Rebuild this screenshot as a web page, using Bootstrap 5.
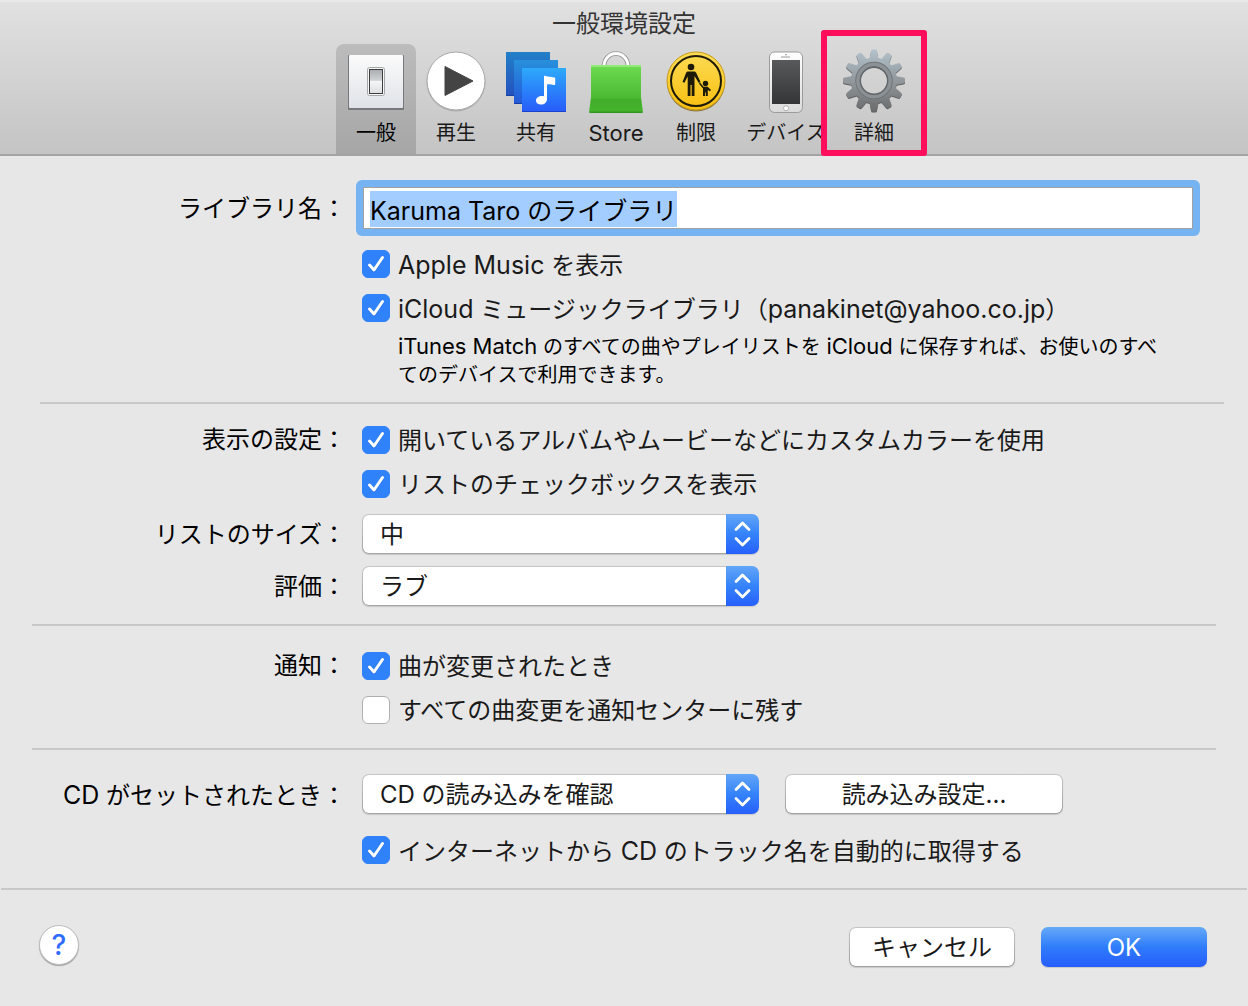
<!DOCTYPE html>
<html lang="ja">
<head>
<meta charset="utf-8">
<meta name="viewport" content="width=device-width, initial-scale=1">
<title>一般環境設定</title>
<link href="https://cdn.jsdelivr.net/npm/bootstrap@5.3.0/dist/css/bootstrap.min.css" rel="stylesheet">
<style>
:root { --win: #e7e7e7; --rule: #c8c8c8; }
body { background: var(--win); color: #1a1a1a; font: 400 24px/36px Inter, "Noto Sans CJK JP", sans-serif; }
.latin { font-size: 25px; }

/* title bar and toolbar */
.prefs-head { background: linear-gradient(#e1e1e1, #c4c4c4); border-top: 2px solid #e9e9e9; border-bottom: 2px solid #a3a3a3; }
.prefs-head h1 { font-size: 24px; line-height: 40px; padding-top: 2px; font-weight: 400; color: #333; margin: 0; }
.tool { width: 80px; height: 110px; padding: 4px 0 7px; border: 0; border-radius: 8px 8px 0 0; background: none; color: #1a1a1a; font-size: 20px; line-height: 28px; white-space: nowrap; position: relative; }
.tool svg { display: block; margin: 0 auto 3px; }
.tool .latin { font-size: 22px; }
.tool.chosen { background: linear-gradient(#bcbcbc, #a6a6a6); color: #000; }
.tool-wide { width: 100px; }
.tool-marked { width: 76px; }
.tool-marked::after { content: ""; position: absolute; inset: -14px -15px -2px; border: 6px solid #ff0f5b; border-radius: 3px; }

/* form rows */
.field-label { width: 346px; flex: none; text-align: right; color: #000; }
label.field-label, .tick-row label { padding-top: 2px; }
.rule { height: 2px; background: var(--rule); margin: 0 32px; }
.rule-first { margin: 0 24px 0 40px; }
.ring { background: #76b3f2; border-radius: 6px; padding: 7px; margin-left: -6px; }
.name-input { height: 42px; padding: 1px 6px 0; border: 1px solid #a2a2a2; border-radius: 0; color: #000; font-size: 25px; line-height: 34px; }
.name-input:focus { box-shadow: none; border-color: #a2a2a2; color: #000; }
.name-input::selection { background: #a4cdff; color: #000; }
.tick-row { display: flex; align-items: center; gap: 8px; height: 28px; white-space: nowrap; }
.tick-row .form-check-input { width: 28px; height: 28px; margin: 0; flex: none; border: 1px solid #b0b0b0; border-radius: 6px; background-color: #fff; }
.tick-row .form-check-input:checked { border-color: #3082fa; background-color: #3082fa; background-size: 28px 28px; background-position: center;
  background-image: url("data:image/svg+xml,%3Csvg xmlns='http://www.w3.org/2000/svg' viewBox='0 0 28 28'%3E%3Cpath d='M7.5 16 12 21 20.5 8' fill='none' stroke='%231d5fd0' stroke-opacity='.5' stroke-width='3' stroke-linecap='round' stroke-linejoin='round'/%3E%3Cpath d='M7.5 15 12 20 20.5 7.500' fill='none' stroke='white' stroke-width='3' stroke-linecap='round' stroke-linejoin='round'/%3E%3C/svg%3E"); }
.note { font-size: 20px; line-height: 28px; color: #000; padding: 10px 24px 0 36px; }
.note .latin { font-size: 22px; }
.popup { width: 397px; height: 40px; padding: 2px 40px 0 17px; border: 1px solid transparent; border-radius: 7px; color: #1a1a1a; font-size: 24px; line-height: 36px; box-shadow: 0 1px 1px rgba(0,0,0,.14);
  background:
    url("data:image/svg+xml,%3Csvg xmlns='http://www.w3.org/2000/svg' viewBox='0 0 33 40'%3E%3Cdefs%3E%3ClinearGradient id='g' x2='0' y2='1'%3E%3Cstop stop-color='%2362a6f7'/%3E%3Cstop offset='.5' stop-color='%233583fb'/%3E%3Cstop offset='1' stop-color='%23265ffb'/%3E%3C/linearGradient%3E%3C/defs%3E%3Cpath fill='url(%23g)' d='M0 0h33v40H0z'/%3E%3Cpath d='M10 15.500 16.500 9 23 15.500M10 24.500 16.500 31 23 24.500' fill='none' stroke='white' stroke-width='2.800' stroke-linecap='round' stroke-linejoin='round'/%3E%3C/svg%3E") right center / 33px 40px no-repeat border-box,
    linear-gradient(#fff, #fff) padding-box,
    linear-gradient(#c6c6c6, #a5a5a5) border-box; }
.push { height: 40px; padding: 1px 0 0; border: 1px solid transparent; border-radius: 7px; color: #1a1a1a; font-size: 24px; line-height: 36px; box-shadow: 0 1px 1px rgba(0,0,0,.14); background: linear-gradient(#fff, #fff) padding-box, linear-gradient(#c6c6c6, #a0a0a0) border-box; }
.push-wide { width: 278px; margin-left: 10px; }
.push-end { width: 166px; }
.push-main { color: #fff; background: linear-gradient(#66a9f8, #2f7dfb 50%, #265cfc) border-box; }
.help { width: 40px; height: 40px; padding: 0; border-radius: 50%; border: 1px solid #bdbdbd; background: #fff; color: #2f6bff; font-size: 28px; font-weight: 500; line-height: 36px; box-shadow: 0 1px 1px rgba(0,0,0,.3); }
.sec-name { padding: 24px 48px 13px 0; }
.sec-view { padding: 22px 32px 18px 0; }
.sec-note { padding: 26px 32px 24px 0; }
.sec-disc { padding: 24px 32px 24px 0; }
.ticks-name { margin-top: 14px; }
.ticks-disc { margin-top: 22px; }
.popup-stack { display: grid; gap: 12px; }
.prefs-foot { border-top: 2px solid var(--rule); padding: 35px 40px 39px 38px; margin: 0 1px; }
.foot-actions { gap: 26px; padding-top: 2px; }
</style>
<script src="https://cdn.jsdelivr.net/npm/bootstrap@5.3.0/dist/js/bootstrap.bundle.min.js"></script>
</head>
<body>
<header class="prefs-head">
  <h1 class="text-center">一般環境設定</h1>
  <nav class="d-flex justify-content-center" aria-label="環境設定">
    <button type="button" class="tool chosen">
      <svg width="64" height="68" viewBox="0 0 64 68">
        <defs>
          <linearGradient id="plate" x2="0" y2="1"><stop stop-color="#fbfbfb"/><stop offset="1" stop-color="#dfe3e8"/></linearGradient>
          <linearGradient id="rocker" x2="0" y2="1"><stop stop-color="#a9adb1"/><stop offset=".45" stop-color="#cfd2d5"/><stop offset=".5" stop-color="#f6f6f6"/><stop offset="1" stop-color="#dcdee1"/></linearGradient>
        </defs>
        <rect x="4" y="7" width="56" height="55" rx="1" fill="#75797d"/>
        <rect x="5" y="7" width="54" height="53" rx="1" fill="url(#plate)"/>
        <rect x="23.500" y="19.500" width="17" height="28" rx="2" fill="#f7f7f7" stroke="#a6a6a6"/>
        <rect x="25.500" y="21.500" width="13" height="24" fill="url(#rocker)" stroke="#3d3d3d"/>
      </svg>一般</button>
    <button type="button" class="tool">
      <svg width="64" height="68" viewBox="0 0 64 68">
        <circle cx="32" cy="34" r="29.500" fill="#8f8f8f" opacity=".5"/>
        <circle cx="32" cy="33" r="29" fill="#fff" stroke="#a9a9a9"/>
        <path d="M21 18.500 49 33 21 47.500z" fill="#444" stroke="#444" stroke-linejoin="round"/>
      </svg>再生</button>
    <button type="button" class="tool">
      <svg width="64" height="68" viewBox="0 0 64 68">
        <defs>
          <linearGradient id="s1" x2="0" y2="1"><stop stop-color="#2280c8"/><stop offset="1" stop-color="#2450bd"/></linearGradient>
          <linearGradient id="s2" x2="0" y2="1"><stop stop-color="#2890dc"/><stop offset="1" stop-color="#2458d8"/></linearGradient>
          <linearGradient id="s3" x2="0" y2="1"><stop stop-color="#2daafa"/><stop offset="1" stop-color="#275bfa"/></linearGradient>
        </defs>
        <g transform="translate(0 1)">
        <path fill="url(#s1)" d="M2 3h44v44H2z"/><path fill="#173f9d" d="M2 46h8v1H2z"/>
        <path fill="url(#s2)" d="M10 11h44v44H10z"/><path fill="#173f9d" d="M10 54h8v1h-8z"/>
        <path fill="url(#s3)" d="M18 19h44v44H18z"/><path fill="#1a43c8" d="M18 62h44v1H18z"/>
        <path d="M40 26.500c4 1.500 6 1 10.500 2 .4.100.7.500.7 1v5.500c0 1-.7 1.300-1.500 1-2.500-1-4.500-1-6.700-.500V50c0 3.500-2.500 5.500-6 5.500-3 0-5-1.500-5-3.800 0-3 3-5 8-4.500z" fill="#fff"/>
        </g>
      </svg>共有</button>
    <button type="button" class="tool">
      <svg width="64" height="68" viewBox="0 0 64 68">
        <defs><linearGradient id="bag" x2="0" y2="1"><stop stop-color="#6ddc52"/><stop offset=".7" stop-color="#4bb932"/><stop offset=".72" stop-color="#42ad2b"/><stop offset="1" stop-color="#46b42d"/></linearGradient></defs>
        <g transform="translate(0 1)">
        <path d="M20 17a12 12.500 0 0 1 24 0" fill="none" stroke="#999" stroke-width="4.500"/>
        <path d="M20 17a12 12.500 0 0 1 24 0" fill="none" stroke="#fff" stroke-width="2.800"/>
        <path d="M7 16h50v32l2 15.500H5L7 48z" fill="url(#bag)"/>
        <path d="M7 16h50v2H7z" fill="#92ea78"/><path d="M5.500 62.500h53v1.500h-53z" fill="#329421"/>
        </g>
      </svg><span class="latin">Store</span></button>
    <button type="button" class="tool">
      <svg width="64" height="68" viewBox="0 0 64 68">
        <defs><linearGradient id="sign" x2="0" y2="1"><stop stop-color="#fcdb55"/><stop offset="1" stop-color="#f9bf0f"/></linearGradient></defs>
        <g transform="translate(0 1)">
        <circle cx="32" cy="33.500" r="29" fill="#8d7a3d"/>
        <circle cx="32" cy="32" r="29" fill="url(#sign)" stroke="#c79b1c"/>
        <circle cx="32" cy="32" r="25" fill="none" stroke="#1d1a08" stroke-width="2"/>
        <g fill="#1d1a08">
          <circle cx="27" cy="18" r="3.300"/>
          <path d="M24 22.500h6c1.200 0 1.800.6 2.300 1.500l4.200 9-1.700.9-4.300-7V47h-2.800V36h-1.200v11h-2.800V27.500l-3.300 6.300-1.900-.8 3.500-9c.4-.9 1-1.500 2-1.500z"/>
          <circle cx="41.500" cy="34.500" r="2.700"/>
          <path d="M36 33.500l3.500 4.300h4.200l3.300 3.300-1 1.100-2.200-1.300V47h-2v-3.500h-.8V47h-2v-7.500l-4-4.800z"/>
        </g>
        </g>
      </svg>制限</button>
    <button type="button" class="tool tool-wide">
      <svg width="64" height="68" viewBox="0 0 64 68">
        <defs>
          <linearGradient id="glass" x2="0" y2="1"><stop stop-color="#58595b"/><stop offset="1" stop-color="#343537"/></linearGradient>
          <linearGradient id="shell" x2="0" y2="1"><stop stop-color="#fff"/><stop offset="1" stop-color="#dadada"/></linearGradient>
        </defs>
        <g transform="translate(0 1)">
        <rect x="15.500" y="3" width="33" height="60.500" rx="5" fill="url(#shell)" stroke="#9b9b9b"/>
        <path d="M18 11h28v44H18z" fill="url(#glass)"/>
        <path d="M27 8h9" stroke="#999"/><circle cx="32" cy="5.800" r=".8" fill="#888"/>
        <circle cx="32" cy="59.300" r="2.500" fill="#fff" stroke="#b0b0b0"/>
        </g>
      </svg>デバイス</button>
    <button type="button" class="tool tool-marked">
      <svg width="64" height="68" viewBox="0 0 64 68">
        <defs>
          <linearGradient id="steel" gradientUnits="userSpaceOnUse" x1="0" y1="1" x2="0" y2="64"><stop stop-color="#b4c3ce"/><stop offset=".5" stop-color="#92989c"/><stop offset="1" stop-color="#696b6c"/></linearGradient>
          <path id="tooth" d="M27.500 11 29 3Q29.200 1.500 30.500 1.500h3Q34.800 1.500 35 3L36.500 11z"/>
          <mask id="gear">
            <g fill="#fff"><circle cx="32" cy="32.500" r="23"/>
            <use href="#tooth"/><use href="#tooth" transform="rotate(30 32 32.500)"/><use href="#tooth" transform="rotate(60 32 32.500)"/><use href="#tooth" transform="rotate(90 32 32.500)"/><use href="#tooth" transform="rotate(120 32 32.500)"/><use href="#tooth" transform="rotate(150 32 32.500)"/><use href="#tooth" transform="rotate(180 32 32.500)"/><use href="#tooth" transform="rotate(210 32 32.500)"/><use href="#tooth" transform="rotate(240 32 32.500)"/><use href="#tooth" transform="rotate(270 32 32.500)"/><use href="#tooth" transform="rotate(300 32 32.500)"/><use href="#tooth" transform="rotate(330 32 32.500)"/></g>
            <circle cx="32" cy="32.500" r="13.500" fill="#000"/>
          </mask>
        </defs>
        <path d="M0 0h64v66H0z" transform="translate(0 1)" fill="#5c5f61" mask="url(#gear)"/>
        <path d="M0 0h64v66H0z" fill="url(#steel)" mask="url(#gear)"/>
        <circle cx="32" cy="32.500" r="18" fill="none" stroke="#6f7579" stroke-width="1.500"/>
        <circle cx="32" cy="32.500" r="16.300" fill="none" stroke="#8c9195" stroke-width="3"/>
        <circle cx="32" cy="32.500" r="13.700" fill="none" stroke="#62676b" stroke-width="1.500"/>
      </svg>詳細</button>
  </nav>
</header>

<main>
  <section class="sec-name">
    <div class="d-flex align-items-center gap-3">
      <label class="field-label" for="lib">ライブラリ名：</label>
      <div class="ring flex-grow-1"><input id="lib" type="text" class="form-control name-input" value="Karuma Taro のライブラリ" autofocus></div>
    </div>
    <div class="d-flex gap-3 ticks-name">
      <div class="field-label"></div>
      <div class="flex-grow-1">
        <div class="tick-row mb-3"><input class="form-check-input" type="checkbox" id="c1" checked><label for="c1"><span class="latin">Apple Music</span> を表示</label></div>
        <div class="tick-row"><input class="form-check-input" type="checkbox" id="c2" checked><label for="c2"><span class="latin">iCloud</span> ミュージックライブラリ（<span class="latin">panakinet@yahoo.co.jp</span>）</label></div>
        <div class="note"><span class="latin">iTunes Match</span> のすべての曲やプレイリストを <span class="latin">iCloud</span> に保存すれば、お使いのすべてのデバイスで利用できます。</div>
      </div>
    </div>
  </section>
  <div class="rule rule-first"></div>
  <section class="sec-view">
    <div class="d-flex gap-3">
      <div class="field-label"><div class="tick-row justify-content-end">表示の設定：</div></div>
      <div>
        <div class="tick-row mb-3"><input class="form-check-input" type="checkbox" id="c3" checked><label for="c3">開いているアルバムやムービーなどにカスタムカラーを使用</label></div>
        <div class="tick-row mb-3"><input class="form-check-input" type="checkbox" id="c4" checked><label for="c4">リストのチェックボックスを表示</label></div>
      </div>
    </div>
    <div class="popup-stack">
      <div class="d-flex align-items-center gap-3">
        <label class="field-label" for="size">リストのサイズ：</label>
        <select class="form-select popup" id="size"><option>中</option></select>
      </div>
      <div class="d-flex align-items-center gap-3">
        <label class="field-label" for="rate">評価：</label>
        <select class="form-select popup" id="rate"><option>ラブ</option></select>
      </div>
    </div>
  </section>
  <div class="rule"></div>
  <section class="sec-note">
    <div class="d-flex gap-3">
      <div class="field-label"><div class="tick-row justify-content-end">通知：</div></div>
      <div>
        <div class="tick-row mb-3"><input class="form-check-input" type="checkbox" id="c5" checked><label for="c5">曲が変更されたとき</label></div>
        <div class="tick-row"><input class="form-check-input" type="checkbox" id="c6"><label for="c6">すべての曲変更を通知センターに残す</label></div>
      </div>
    </div>
  </section>
  <div class="rule"></div>
  <section class="sec-disc">
    <div class="d-flex align-items-center gap-3">
      <label class="field-label" for="disc"><span class="latin">CD</span> がセットされたとき：</label>
      <select class="form-select popup" id="disc"><option>CD の読み込みを確認</option></select>
      <button type="button" class="btn push push-wide">読み込み設定...</button>
    </div>
    <div class="d-flex gap-3 ticks-disc">
      <div class="field-label"></div>
      <div class="tick-row"><input class="form-check-input" type="checkbox" id="c7" checked><label for="c7">インターネットから <span class="latin">CD</span> のトラック名を自動的に取得する</label></div>
    </div>
  </section>
</main>

<footer class="prefs-foot d-flex align-items-start justify-content-between">
  <button type="button" class="btn help" aria-label="ヘルプ">?</button>
  <div class="d-flex foot-actions">
    <button type="button" class="btn push push-end">キャンセル</button>
    <button type="button" class="btn push push-end push-main">OK</button>
  </div>
</footer>
<script>
const lib = document.getElementById('lib');
lib.focus();
lib.select();
</script>
</body>
</html>
